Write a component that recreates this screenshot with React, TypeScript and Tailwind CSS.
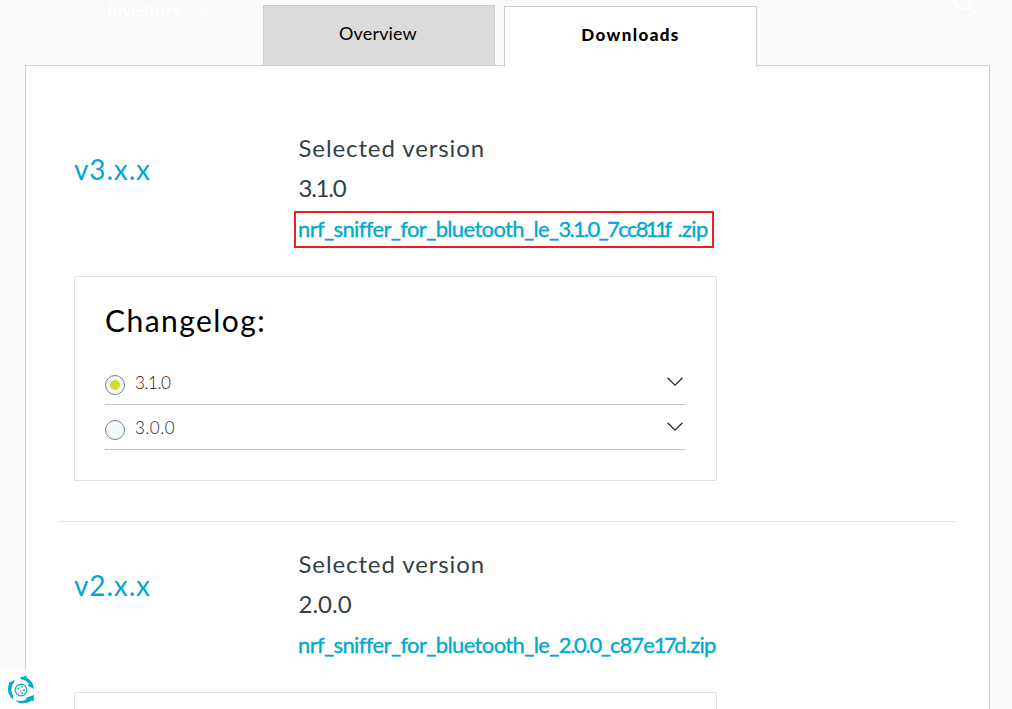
import React from "react";

function Chevron({ className, width = 1.2 }: { className: string; width?: number }) {
  return (
    <svg className={className} viewBox="0 0 16 9" fill="none" stroke="currentColor" strokeWidth={width}>
      <path d="M.5 .7 8 8.1 15.500 .7" />
    </svg>
  );
}

function ChangelogRow({ version, selected, tracking }: { version: string; selected?: boolean; tracking: string }) {
  return (
    <div className="flex h-[45px] items-start border-b border-[#c4c6c8]">
      <span className="mt-[15px] flex size-5 shrink-0 items-center justify-center rounded-full border border-[#7b8084] bg-[#f1f9fc]">
        {selected && <span className="size-[10px] rounded-full bg-[#d1dc2b]" />}
      </span>
      <span className={`ml-[10px] mt-[11px] text-[17px] font-light leading-6 text-[#222] ${tracking}`}>{version}</span>
      <Chevron className="ml-auto mr-[3.500px] mt-[17px] h-[9px] w-4 text-[#222]" />
    </div>
  );
}

type ReleaseProps = {
  series: string;
  version: string;
  versionTracking: string;
  linkFrame: string;
  file: React.ReactNode;
};

function Release({ series, version, versionTracking, linkFrame, file }: ReleaseProps) {
  return (
    <div className="flex h-[120px]">
      <h2 className="w-[220px] shrink-0 pt-[22px] text-[28px] leading-9 tracking-[0.85px] text-[#00a9ce]">{series}</h2>
      <div className="-mt-px text-[24px] text-[#333f48]">
        <div className="h-10 pl-[4.500px] leading-10 tracking-[0.9px]">Selected version</div>
        <div className={`h-[43px] pl-[4.500px] leading-10 ${versionTracking}`}>{version}</div>
        <a
          className={`block h-[37px] whitespace-pre border-2 pl-[2px] text-[22px] leading-[32px] text-[#00a9ce] [-webkit-text-stroke:0.35px_#00a9ce] ${linkFrame}`}
        >
          {file}
        </a>
      </div>
    </div>
  );
}

export default function App() {
  return (
    <div className="relative h-[709px] w-[1012px] overflow-hidden bg-[#f9fbfb] font-['Lato',sans-serif]">
      <div className="flex h-[65px] items-start pl-[263px] pt-[5px]">
        <button className="h-[60px] w-[232px] border border-b-0 border-[#cecece] bg-[#dbdbdb] pb-[4px] pr-[2px] text-[18px] leading-[53px] tracking-[0.15px] text-black">
          Overview
        </button>
        <button className="relative z-10 ml-[9px] mt-px h-[61px] w-[253px] border border-b-0 border-[#cecece] bg-white pb-[4px] text-[17px] font-black leading-[52px] tracking-[1.4px] text-black">
          Downloads
        </button>
      </div>
      <main className="ml-[25px] h-[700px] w-[965px] border border-[#cecece] bg-white pl-[48px] pt-[63px]">
        <Release
          series="v3.x.x"
          version="3.1.0"
          versionTracking="tracking-[-1.25px]"
          linkFrame="w-[420px] border-[#ed1c24]"
          file={
            <>
              <span className="tracking-[-0.640px]">nrf_sniffer_for_bluetooth_le_</span>
              <span className="tracking-[-1.700px]">3.1.0</span>
              <span className="tracking-[-1.600px]">_7cc</span>
              <span className="tracking-[-3.200px]">811</span>
              <span className="tracking-[-0.500px]">f </span>
              <span className="ml-[1px] tracking-[-0.650px]">.zip</span>
            </>
          }
        />
        <section className="mt-[27px] h-[205px] w-[643px] border border-[#dfe5e7] pl-[30px] pr-[30px]">
          <h3 className="h-[83px] pt-[25px] text-[30px] leading-9 tracking-[1.450px] text-black">Changelog:</h3>
          <ChangelogRow version="3.1.0" selected tracking="tracking-[-0.400px]" />
          <ChangelogRow version="3.0.0" tracking="tracking-[0.500px]" />
        </section>
        <hr className="-ml-[15px] mt-[40px] w-[897px] border-[#e3e6e7]" />
        <div className="mt-[23px]">
          <Release
            series="v2.x.x"
            version="2.0.0"
            versionTracking="tracking-[0px]"
            linkFrame="w-[424px] border-transparent"
            file={
              <>
                <span className="tracking-[-0.630px]">nrf_sniffer_for_bluetooth_le_</span>
                <span className="tracking-[-1.300px]">2.0.0</span>
                <span className="tracking-[-0.950px]">_c87e</span>
                <span className="tracking-[-2.600px]">17</span>
                <span className="tracking-[-0.750px]">d.zip</span>
              </>
            }
          />
        </div>
        <section className="mt-[27px] h-[100px] w-[643px] border border-[#dfe5e7]" />
      </main>

      <div className="absolute left-[107px] top-0 flex text-white">
        <span className="text-[18px] font-bold leading-[20px] tracking-[-0.05px]">Investors</span>
        <Chevron className="ml-[11px] mt-[5px] h-[10px] w-[19px]" width={1.2} />
      </div>
      <svg className="absolute left-[952px] top-[-10px] size-6 text-white" viewBox="0 0 24 24" fill="none" stroke="currentColor" strokeWidth="2">
        <circle cx="11" cy="11" r="8" />
        <path d="m16.500 16.500 7 7" />
      </svg>

      <button className="absolute bottom-0 left-0 flex h-10 w-[43px] bg-white pl-[7px] pt-[6px]">
        <svg className="size-[29px]" viewBox="0 0 29 29" fill="none" stroke="#00a9ce">
          <circle cx="14" cy="15" r="5.800" strokeWidth="1.200" />
          <g fill="#00a9ce" stroke="none">
            <circle cx="11.500" cy="13.500" r=".9" />
            <circle cx="15" cy="12" r=".8" />
            <circle cx="17" cy="15" r=".9" />
            <circle cx="13.500" cy="16" r=".7" />
            <circle cx="15" cy="18.500" r=".9" />
            <circle cx="11.500" cy="18" r=".6" />
            <path d="M13 2.500 20 .5 19 2.500C23.500 4.500 26.500 8.500 27 14L20.500 10.500 22.300 9.300C20 6.200 17.500 4.800 14 4.300Z" />
            <path d="M2 7.500 8 5 6.500 8C4 11.500 3.800 16.500 5.800 20.500L6 24.500C1 20 0 14.500 2 9Z" />
            <path d="M9.500 25.200C13.500 26.500 17.500 26 19.800 24L18.500 23 27 20 26.500 26.500 24.500 25.500C20 29 14 29 9.500 26.500Z" />
          </g>
        </svg>
      </button>
    </div>
  );
}
